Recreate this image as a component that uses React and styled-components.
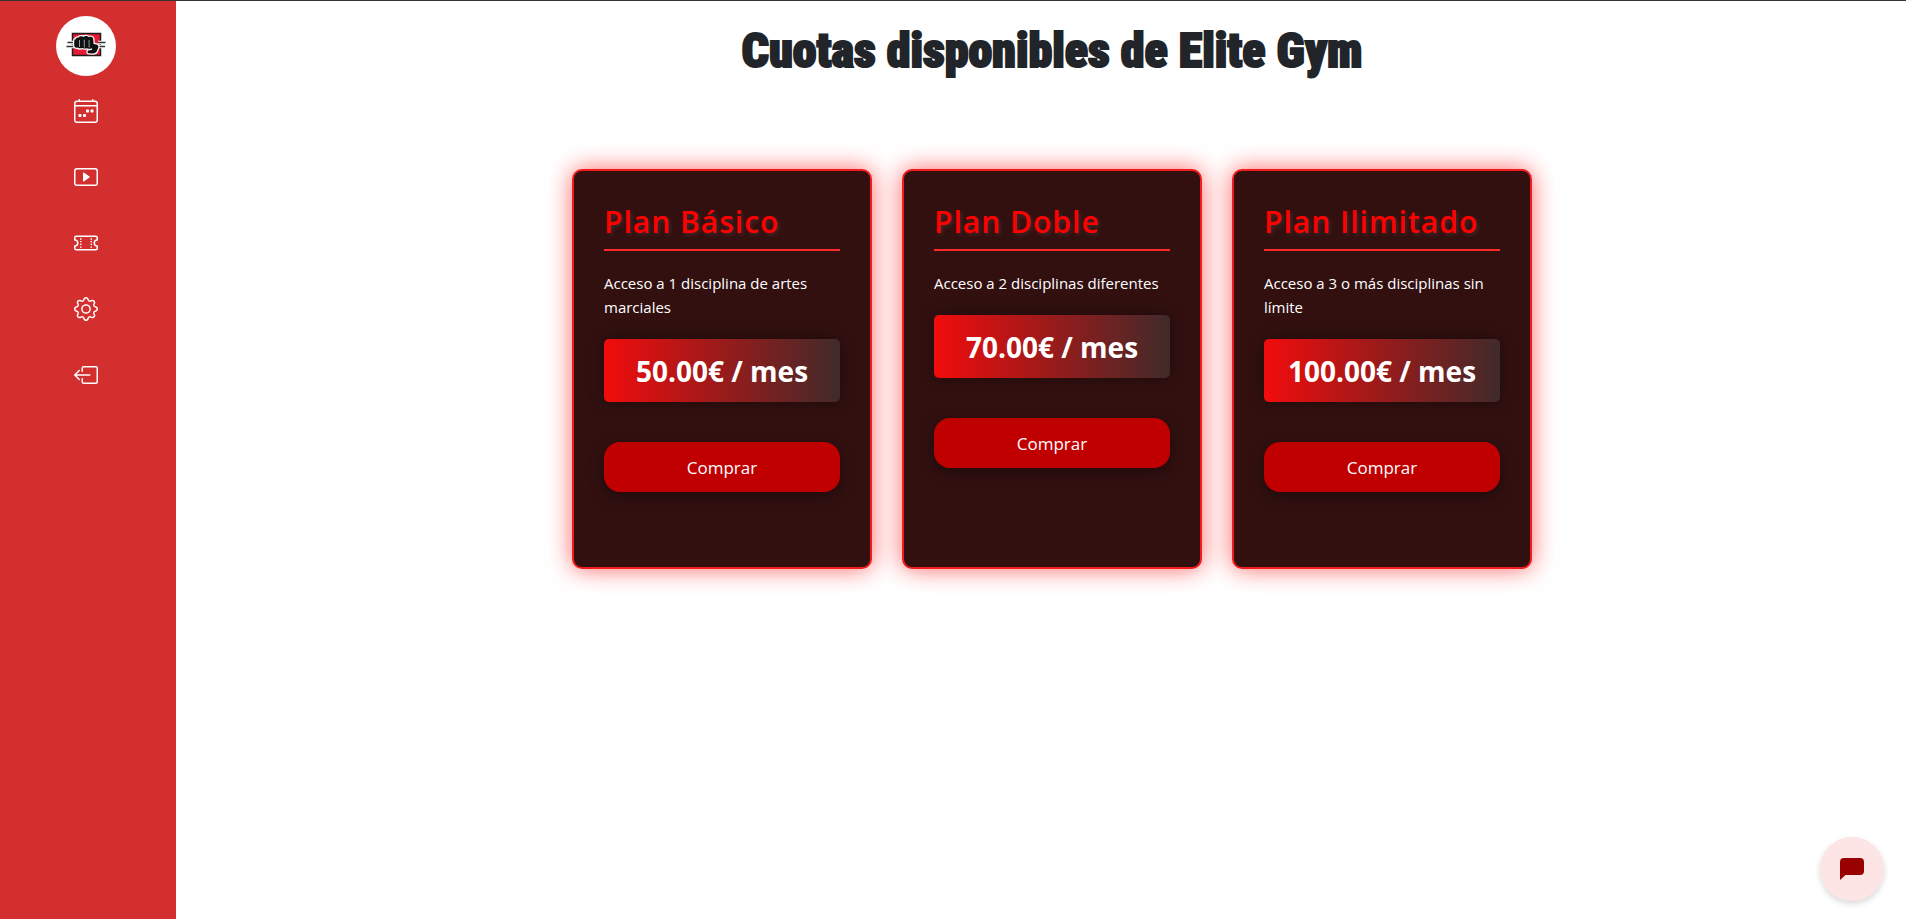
import React from "react";
import styled, { createGlobalStyle } from "styled-components";
import {
  BsCalendar4Week,
  BsPlayBtn,
  BsTicketPerforated,
  BsGear,
  BsBoxArrowLeft,
} from "react-icons/bs";

const GlobalStyle = createGlobalStyle`
  *, *::before, *::after { box-sizing: border-box; }
  body {
    margin: 0;
    background: #fff;
    color: #212529;
    font-family: "Segoe UI", "Open Sans", "Noto Sans", sans-serif;
    font-size: 16px;
    line-height: 24px;
  }
`;

const Page = styled.div`
  display: flex;
  min-height: 100vh;
  border-top: 1px solid #333;
`;

const Sidebar = styled.nav`
  display: flex;
  flex-direction: column;
  align-items: center;
  flex: 0 0 176px;
  padding: 15px 4px 0 0;
  background: #d32f2f;
`;

const LogoLink = styled.a`
  display: block;
  width: 60px;
  height: 60px;
  border-radius: 50%;
  background: #fff;
`;

const NavList = styled.ul`
  display: flex;
  flex-direction: column;
  gap: 42px;
  margin: 23px 0 0;
  padding: 0;
  list-style: none;
`;

const NavLink = styled.a`
  display: block;
  color: #fff;

  svg {
    display: block;
    width: 24px;
    height: 24px;
  }
`;

const Main = styled.main`
  flex: 1;
  padding: 20px 0 24px 22px;
`;

const Title = styled.h1`
  margin: 0;
  font-family: Impact, "Roboto Condensed", "Arial Narrow", sans-serif;
  font-size: 48px;
  font-weight: 900;
  line-height: 60px;
  text-align: center;
  -webkit-text-stroke: 2px currentColor;
`;

const Plans = styled.section`
  display: flex;
  flex-wrap: wrap;
  justify-content: center;
  gap: 30px;
  margin-top: 88px;
`;

const Card = styled.article`
  width: 300px;
  min-height: 400px;
  padding: 30px;
  border: 2px solid #f21c1c;
  border-radius: 10px;
  background: #321010;
  color: #fff;
  box-shadow: 0 0 25px rgba(255, 0, 0, 0.6);
`;

const PlanName = styled.h2`
  margin: 0 0 20px;
  padding: 3px 0 9px;
  border-bottom: 2px solid #ff2b2b;
  color: #f00;
  font-size: 30px;
  font-weight: 600;
  line-height: 36px;
  letter-spacing: 1px;
  white-space: nowrap;
  text-shadow: 2px 2px 4px rgba(255, 255, 255, 0.1);
`;

const Description = styled.p`
  margin: 0 0 20px;
  font-size: 15px;
`;

const Price = styled.p`
  margin: 0 0 40px;
  padding: 11px 10px 9px;
  border-radius: 5px;
  background: linear-gradient(90deg, #f20c0c, #412a2a);
  font-size: 28px;
  font-weight: 700;
  line-height: 43px;
  text-align: center;
  box-shadow: 0 0 15px rgba(0, 0, 0, 0.4);
`;

const BuyButton = styled.button`
  display: block;
  width: 100%;
  height: 50px;
  border: 0;
  border-radius: 16px;
  background: #c00000;
  color: #fff;
  font-family: inherit;
  font-size: 17px;
  cursor: pointer;
  box-shadow: 0 4px 15px rgba(0, 0, 0, 0.4);
`;

const ChatButton = styled.button`
  position: fixed;
  right: 22px;
  bottom: 18px;
  display: flex;
  align-items: center;
  justify-content: center;
  width: 64px;
  height: 64px;
  padding: 0;
  border: 0;
  border-radius: 50%;
  background: #fde5e5;
  cursor: pointer;
  box-shadow: 0 3px 6px rgba(0, 0, 0, 0.15);
`;

const links = [
  { label: "Calendario", Icon: BsCalendar4Week },
  { label: "Vídeos", Icon: BsPlayBtn },
  { label: "Cuotas", Icon: BsTicketPerforated },
  { label: "Ajustes", Icon: BsGear },
  { label: "Salir", Icon: BsBoxArrowLeft },
];

const plans = [
  { name: "Plan Básico", text: "Acceso a 1 disciplina de artes marciales", price: "50.00" },
  { name: "Plan Doble", text: "Acceso a 2 disciplinas diferentes", price: "70.00" },
  { name: "Plan Ilimitado", text: "Acceso a 3 o más disciplinas sin límite", price: "100.00" },
];

function FistLogo() {
  const fist =
    "M19.500 23.500c.2-1.500 1.500-2.300 3-2c.9-1.500 4-1.800 5-.6c1.300-1.200 4.200-1 5.200.3c1.600-.8 4.200-.3 4.500 1.400l.4 5.400l2.900.4c1.500.3 2.200 1.600 1.800 3l-1.400 3.600c-.7 1.700-2.100 2.400-4 2.400l-4.600-.1c-1-.5-1-2.400 0-2.800l3.100-.4c.9-.4 1-1.500.1-1.900c-1 .8-3.400.9-4.500 0c-1.200.6-3.600.5-4.500-.3c-1.300.5-4 .6-5-.3c-1.500.2-3-.4-3.200-1.700c-.3-2-.1-4.400.2-6.400z";
  return (
    <svg width="60" height="60" viewBox="0 0 60 60" aria-hidden="true">
      <rect x="16.500" y="17.500" width="28" height="22" fill="#e51a35" stroke="#1b1d1c" strokeWidth="1.500" />
      <path d="M11 26.500h7M11 30.500h7M42 26.500h7.500M42 30.500h7.500" stroke="#fff" strokeWidth="3.500" />
      <path d="M11.500 26.500h7M10.500 30.500h8M42 26.500h7.500M42 30.500h7" stroke="#333" strokeWidth="1.300" />
      <path d={fist} fill="#0d1110" stroke="#fff" strokeWidth="2.500" strokeLinejoin="round" />
      <path d={fist} fill="#0d1110" />
      <path d="M23.500 24v7M28.300 23.500v8M33.100 24v7.500" stroke="#bbb" strokeWidth=".8" />
    </svg>
  );
}

export default function App() {
  return (
    <>
      <GlobalStyle />
      <Page>
        <Sidebar>
          <LogoLink href="#inicio" aria-label="Elite Gym">
            <FistLogo />
          </LogoLink>
          <NavList>
            {links.map(({ label, Icon }) => (
              <li key={label}>
                <NavLink href="#" aria-label={label}>
                  <Icon />
                </NavLink>
              </li>
            ))}
          </NavList>
        </Sidebar>
        <Main>
          <Title>Cuotas disponibles de Elite Gym</Title>
          <Plans>
            {plans.map((plan) => (
              <Card key={plan.name}>
                <PlanName>{plan.name}</PlanName>
                <Description>{plan.text}</Description>
                <Price>{plan.price}€ / mes</Price>
                <BuyButton type="button">Comprar</BuyButton>
              </Card>
            ))}
          </Plans>
        </Main>
      </Page>
      <ChatButton type="button" aria-label="Abrir chat">
        <svg width="24" height="22" viewBox="0 0 24 22" fill="#900" aria-hidden="true">
          <path d="M4 0h16a4 4 0 0 1 4 4v9a4 4 0 0 1-4 4H5.500L0 22V4a4 4 0 0 1 4-4z" />
        </svg>
      </ChatButton>
    </>
  );
}
